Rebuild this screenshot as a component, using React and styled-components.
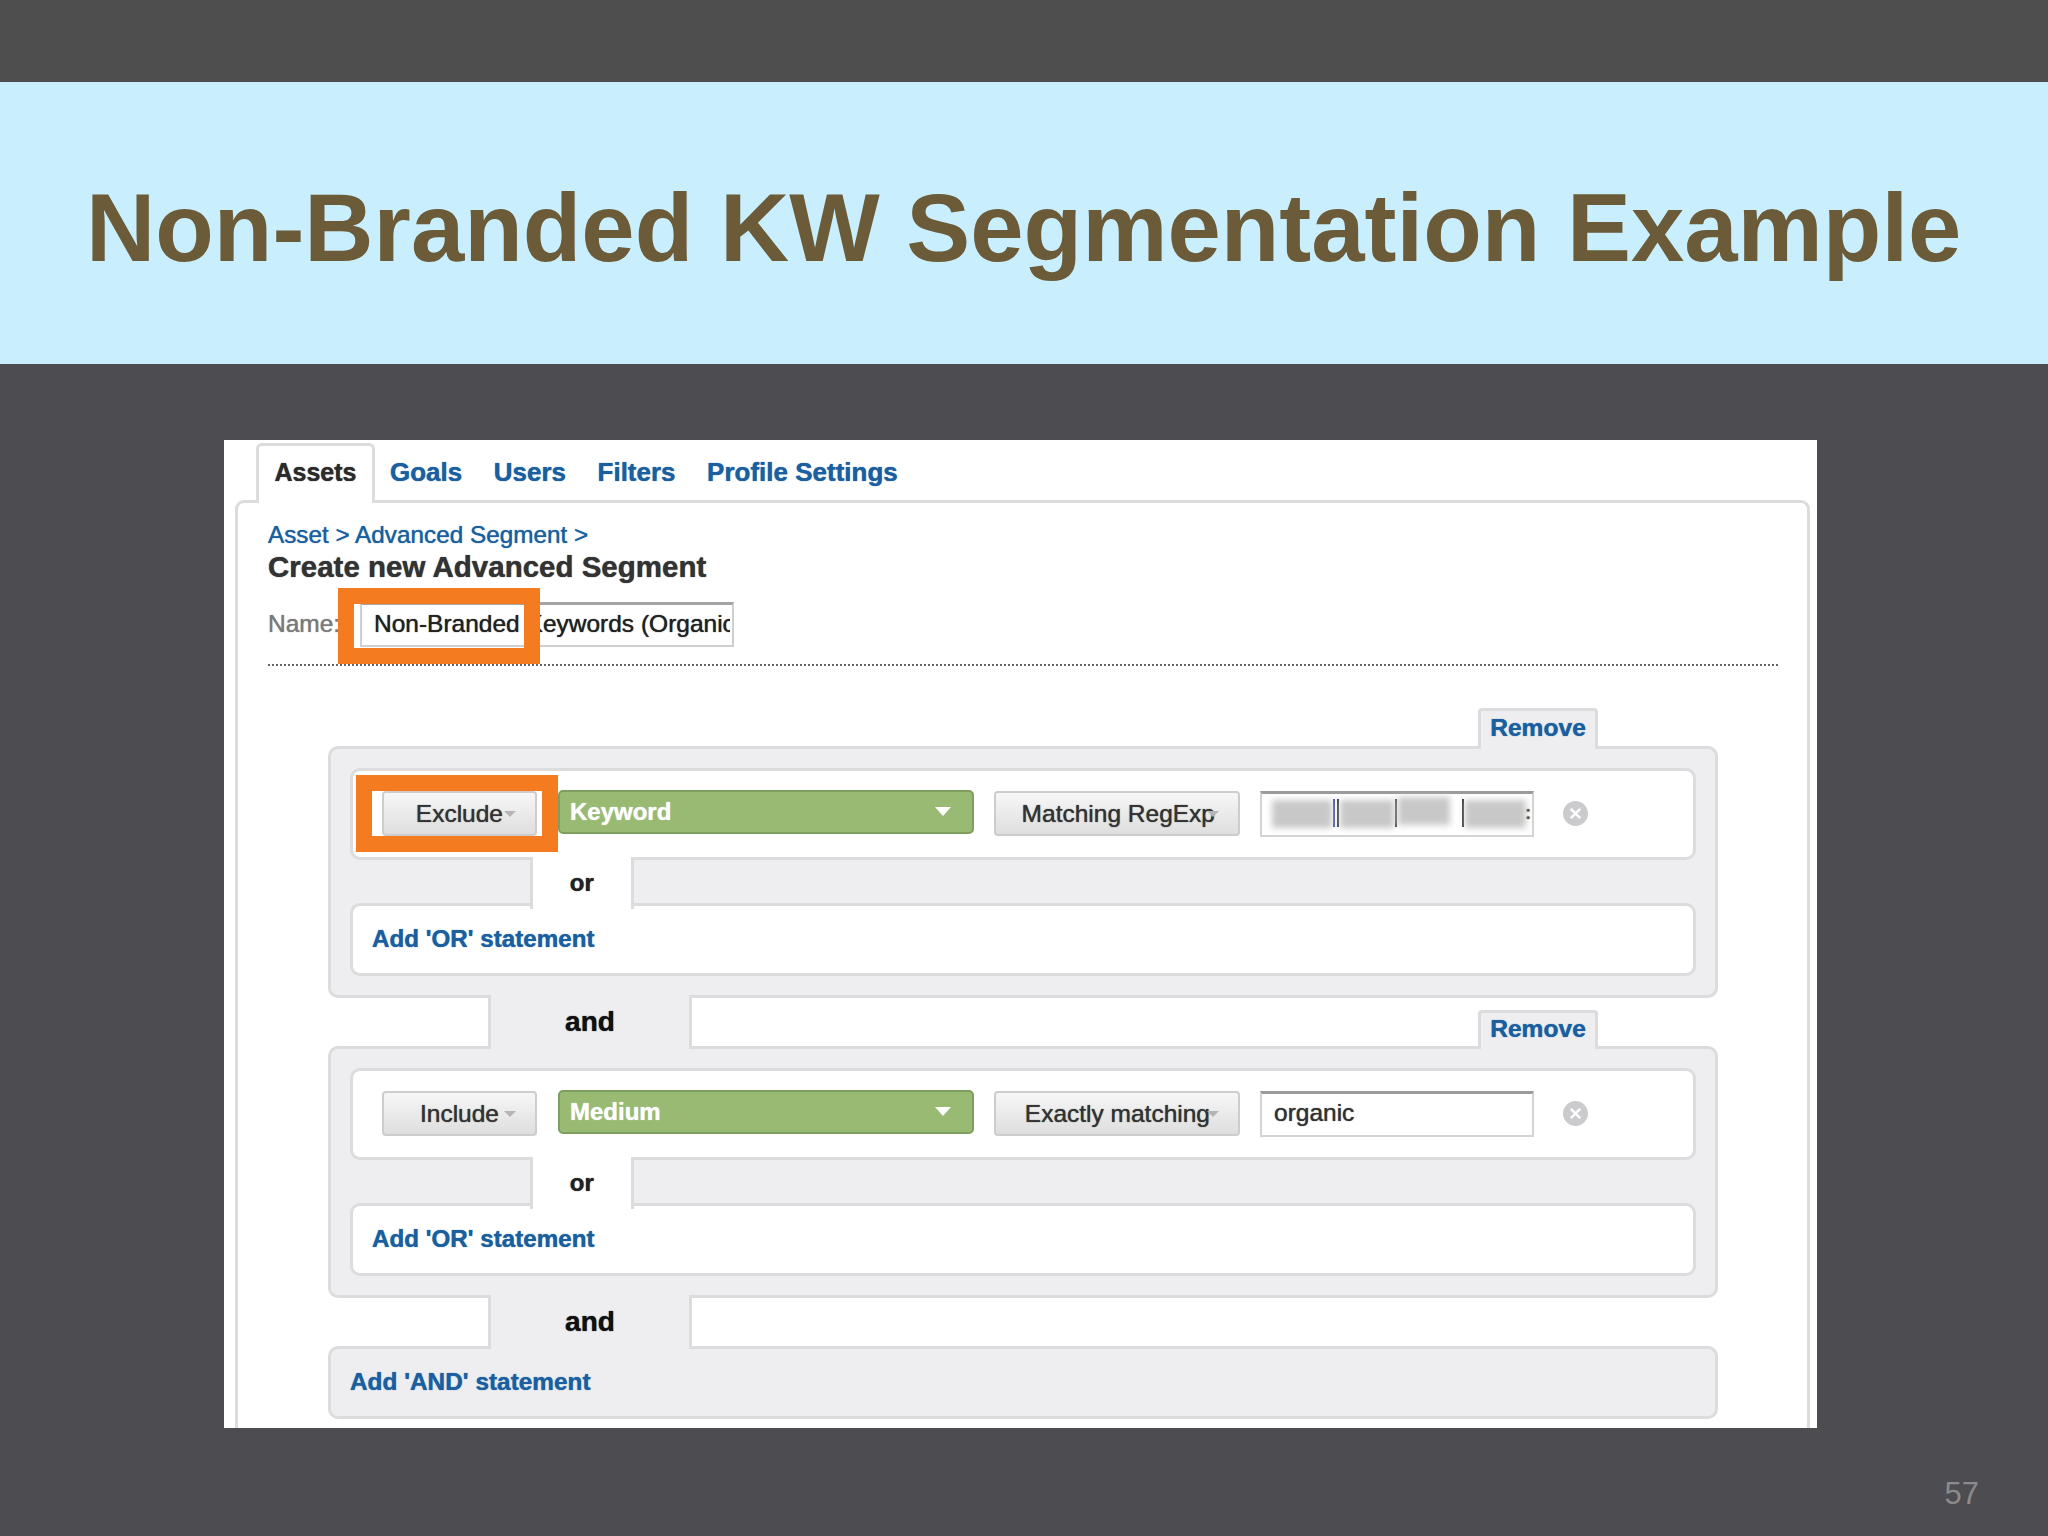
import React from "react";
import styled, { createGlobalStyle } from "styled-components";

const GlobalStyle = createGlobalStyle`
  html, body {
    margin: 0;
    padding: 0;
    background: #4d4c50;
  }
  * {
    box-sizing: border-box;
  }
`;

const BLUE = "#1c5f9f";
const FRAME = "#dcdcde";
const TINT = "#eeeef0";
const ORANGE = "#f47b20";

const segments = [
  { mode: "Exclude", modeGap: "1px", field: "Keyword", match: "Matching RegExp", blurred: true, marked: true, caretGap: "-8px" },
  { mode: "Include", modeGap: "5px", field: "Medium", match: "Exactly matching", value: "organic", caretGap: "-3px" },
];

const App = () => {
  return (
    <Page>
      <GlobalStyle />
      <TopStrip />
      <TitleBand>
        <Title>Non-Branded KW Segmentation Example</Title>
      </TitleBand>
      <Stage>
        <Panel>
          <Tabs>
            <ActiveTab>Assets</ActiveTab>
            <TabLink>Goals</TabLink>
            <TabLink>Users</TabLink>
            <TabLink>Filters</TabLink>
            <TabLink>Profile Settings</TabLink>
          </Tabs>
          <Content>
            <Crumbs>Asset &gt; Advanced Segment &gt;</Crumbs>
            <Heading>Create new Advanced Segment</Heading>
            <NameRow>
              <NameLabel>Name:</NameLabel>
              <NameInput>
                <NameText>Non-Branded Keywords (Organic)</NameText>
                <NameMark />
              </NameInput>
            </NameRow>
            <Dotted />
            <Builder>
              {segments.map((seg, i) => (
                <React.Fragment key={seg.field}>
                  <Joint $first={i === 0}>
                    {i > 0 && <AndCell>and</AndCell>}
                    <RemoveTab $first={i === 0}>Remove</RemoveTab>
                  </Joint>
                  <Group>
                    <Row>
                      <ModeSlot>
                        <GreyButton $width="155px">
                          {seg.mode}
                          <SmallCaret $gap={seg.modeGap} />
                        </GreyButton>
                        {seg.marked && <ModeMark />}
                      </ModeSlot>
                      <FieldSelect>
                        {seg.field}
                        <WhiteCaret />
                      </FieldSelect>
                      <GreyButton $width="246px">
                        {seg.match}
                        <SmallCaret $gap={seg.caretGap} />
                      </GreyButton>
                      <ValueInput>
                        {seg.blurred ? <HiddenValue /> : seg.value}
                      </ValueInput>
                      <CloseIcon viewBox="0 0 24 24">
                        <circle cx="12" cy="12" r="12" fill="#cbcbcd" />
                        <path d="M7.5 7.5l9 9M16.5 7.5l-9 9" stroke="#fff" strokeWidth="2.4" />
                      </CloseIcon>
                    </Row>
                    <OrJoint>
                      <OrCell>or</OrCell>
                    </OrJoint>
                    <AddRow>Add 'OR' statement</AddRow>
                  </Group>
                </React.Fragment>
              ))}
              <Joint>
                <AndCell>and</AndCell>
              </Joint>
              <AddAnd>Add 'AND' statement</AddAnd>
            </Builder>
          </Content>
        </Panel>
        <PageNumber>57</PageNumber>
      </Stage>
    </Page>
  );
};

const HiddenValue = () => (
  <Smudges>
    <Smudge $w="60px" />
    <Tick $blue />
    <Tick />
    <Smudge $w="54px" />
    <Tick />
    <Smudge $w="52px" $up />
    <Tick $wide />
    <Smudge $w="61px" />
    <Dots>:</Dots>
  </Smudges>
);

export default App;

const Page = styled.div`
  width: 2048px;
  height: 1536px;
  display: flex;
  flex-direction: column;
  overflow: hidden;
  background: #4d4c50;
  font-family: "Liberation Sans", Arial, sans-serif;
`;
const TopStrip = styled.div`
  height: 82px;
  background: #4e4e4f;
`;
const TitleBand = styled.div`
  height: 282px;
  display: flex;
  align-items: center;
  padding: 10px 0 0 86px;
  background: #c9effe;
`;
const Title = styled.h1`
  margin: 0;
  font-size: 95.9px;
  font-weight: 700;
  line-height: 110px;
  white-space: nowrap;
  color: #6b5b38;
`;
const Stage = styled.div`
  flex: 1;
  display: flex;
  flex-direction: column;
  padding-top: 76px;
`;
const Panel = styled.div`
  width: 1593px;
  height: 988px;
  margin-left: 224px;
  padding-top: 3px;
  display: flex;
  flex-direction: column;
  overflow: hidden;
  background: #fff;
  text-shadow: 0 0 1px;
`;
const Tabs = styled.div`
  flex: none;
  height: 56.5px;
  padding-left: 32px;
  display: flex;
  align-items: center;
  font-size: 26px;
  font-weight: 700;
`;
const ActiveTab = styled.div`
  position: relative;
  z-index: 1;
  width: 119px;
  height: 59.5px;
  margin-right: 15px;
  padding-bottom: 3px;
  display: flex;
  align-items: center;
  justify-content: center;
  align-self: flex-start;
  font-size: 25px;
  color: #2b2b2b;
  background: #fff;
  border: 3px solid ${FRAME};
  border-bottom: none;
  border-radius: 6px 6px 0 0;
`;
const TabLink = styled.div`
  margin-right: 31.5px;
  padding-top: 3px;
  color: ${BLUE};
`;
const Content = styled.div`
  flex: 1;
  margin: 0 7px 0 11px;
  padding: 17.5px 29px 0 30px;
  border: 3px solid ${FRAME};
  border-bottom: none;
  border-radius: 9px 9px 0 0;
`;
const Crumbs = styled.div`
  font-size: 24.3px;
  line-height: 30px;
  color: ${BLUE};
`;
const Heading = styled.h2`
  margin: 1px 0 0;
  font-size: 29.5px;
  line-height: 32px;
  font-weight: 700;
  color: #333;
`;
const NameRow = styled.div`
  margin-top: 19px;
  height: 45px;
  display: flex;
  align-items: center;
`;
const NameLabel = styled.div`
  width: 92px;
  padding-bottom: 2px;
  font-size: 24.5px;
  color: #7a7a7a;
`;
const NameInput = styled.div`
  position: relative;
  width: 374px;
  height: 45px;
  padding: 0 2px 2px 12px;
  display: flex;
  align-items: center;
  font-size: 24.5px;
  color: #222;
  background: #fff;
  border: 2px solid #cfcfcf;
  border-top: 3px solid #a5a5a5;
`;
const NameText = styled.div`
  flex: 1;
  overflow: hidden;
  white-space: nowrap;
`;
const NameMark = styled.div`
  position: absolute;
  z-index: 2;
  top: -17px;
  left: -24px;
  width: 202px;
  height: 76px;
  border: 16px solid ${ORANGE};
`;
const Dotted = styled.div`
  margin-top: 17px;
  height: 2px;
  border-top: 2px dotted #666;
`;
const Builder = styled.div`
  width: 1390px;
  margin: 40.5px 0 0 60px;
`;
const Joint = styled.div`
  height: ${(p) => (p.$first ? "39px" : "47.5px")};
  display: flex;
  align-items: flex-end;
`;
const AndCell = styled.div`
  position: relative;
  z-index: 1;
  width: 204px;
  height: 53.5px;
  margin: -3px 0 -3px 160px;
  display: flex;
  align-items: center;
  justify-content: center;
  background: ${TINT};
  border-left: 3px solid ${FRAME};
  border-right: 3px solid ${FRAME};
  font-size: 28px;
  font-weight: 700;
  color: #111;
`;
const RemoveTab = styled.div`
  position: relative;
  z-index: 1;
  width: 120px;
  height: ${(p) => (p.$first ? "40.5px" : "38.5px")};
  margin: 0 120px -3px auto;
  padding-bottom: 3px;
  display: flex;
  align-items: center;
  justify-content: center;
  background: ${TINT};
  border: 3px solid ${FRAME};
  border-bottom: none;
  border-radius: 4px 4px 0 0;
  font-size: 24.6px;
  font-weight: 700;
  color: ${BLUE};
`;
const Group = styled.div`
  padding: 19px 19px 19.5px 19px;
  background: ${TINT};
  border: 3px solid ${FRAME};
  border-radius: 10px;
`;
const Row = styled.div`
  height: 92px;
  padding-left: 29px;
  display: flex;
  align-items: center;
  background: #fff;
  border: 3px solid ${FRAME};
  border-radius: 10px;
`;
const ModeSlot = styled.div`
  position: relative;
  margin-right: 21px;
`;
const GreyButton = styled.div`
  width: ${(p) => p.$width};
  height: 45px;
  padding-right: 19px;
  display: flex;
  align-items: center;
  justify-content: flex-end;
  font-size: 24.5px;
  color: #333;
  background: linear-gradient(#f7f7f7, #dedede);
  border: 2px solid #cdcdcd;
  border-radius: 4px;
`;
const SmallCaret = styled.span`
  width: 0;
  height: 0;
  margin-left: ${(p) => p.$gap};
  border-left: 6px solid transparent;
  border-right: 6px solid transparent;
  border-top: 6px solid #b5b5b5;
`;
const ModeMark = styled.div`
  position: absolute;
  top: -16px;
  bottom: -16px;
  left: -26px;
  right: -21px;
  border: 16px solid ${ORANGE};
`;
const FieldSelect = styled.div`
  width: 416px;
  height: 44px;
  margin: 0 20px 4px 0;
  padding: 0 21px 0 10px;
  display: flex;
  align-items: center;
  justify-content: space-between;
  font-size: 24px;
  font-weight: 700;
  color: #fff;
  background: #98ba73;
  border: 2px solid #7e9f5f;
  border-radius: 5px;
`;
const WhiteCaret = styled.span`
  width: 0;
  height: 0;
  border-left: 8px solid transparent;
  border-right: 8px solid transparent;
  border-top: 9px solid #fff;
`;
const ValueInput = styled.div`
  width: 274px;
  height: 46px;
  margin-left: 20px;
  padding: 0 0 3px 12px;
  display: flex;
  align-items: center;
  font-size: 24.5px;
  color: #333;
  background: #fff;
  border: 2px solid #d4d4d4;
  border-top: 3px solid #9b9b9b;
`;
const Smudges = styled.div`
  height: 32px;
  margin-left: -2px;
  display: flex;
  align-items: center;
`;
const Smudge = styled.div`
  width: ${(p) => p.$w};
  height: 28px;
  margin-top: ${(p) => (p.$up ? "-4px" : "2px")};
  background: #c8c8c8;
  filter: blur(3px);
`;
const Tick = styled.div`
  flex: none;
  width: 2px;
  height: 28px;
  margin: 0 ${(p) => (p.$wide ? "1px 0 12px" : "1px")};
  background: ${(p) => (p.$blue ? "#3b4fa8" : "#333")};
`;
const Dots = styled.span`
  margin-left: -1px;
  font-size: 18px;
  line-height: 18px;
  font-weight: 700;
  color: #333;
`;
const CloseIcon = styled.svg`
  width: 25px;
  height: 25px;
  margin-left: 29px;
`;
const OrJoint = styled.div`
  height: 46.5px;
`;
const OrCell = styled.div`
  position: relative;
  z-index: 1;
  width: 103.5px;
  height: 52.5px;
  margin: -3px 0 0 180px;
  display: flex;
  align-items: center;
  justify-content: center;
  background: #fff;
  border-left: 3px solid ${FRAME};
  border-right: 3px solid ${FRAME};
  font-size: 24px;
  font-weight: 700;
  color: #222;
`;
const AddRow = styled.div`
  height: 72.5px;
  padding-left: 19px;
  display: flex;
  align-items: center;
  font-size: 24.2px;
  font-weight: 700;
  color: ${BLUE};
  background: #fff;
  border: 3px solid ${FRAME};
  border-radius: 10px;
`;
const AddAnd = styled.div`
  height: 73.5px;
  padding-left: 19px;
  display: flex;
  align-items: center;
  font-size: 24.4px;
  font-weight: 700;
  color: ${BLUE};
  background: ${TINT};
  border: 3px solid ${FRAME};
  border-radius: 10px;
`;
const PageNumber = styled.div`
  align-self: flex-end;
  margin: 48px 69px 0 0;
  font-size: 31px;
  line-height: 36px;
  color: #8b8b8b;
`;
